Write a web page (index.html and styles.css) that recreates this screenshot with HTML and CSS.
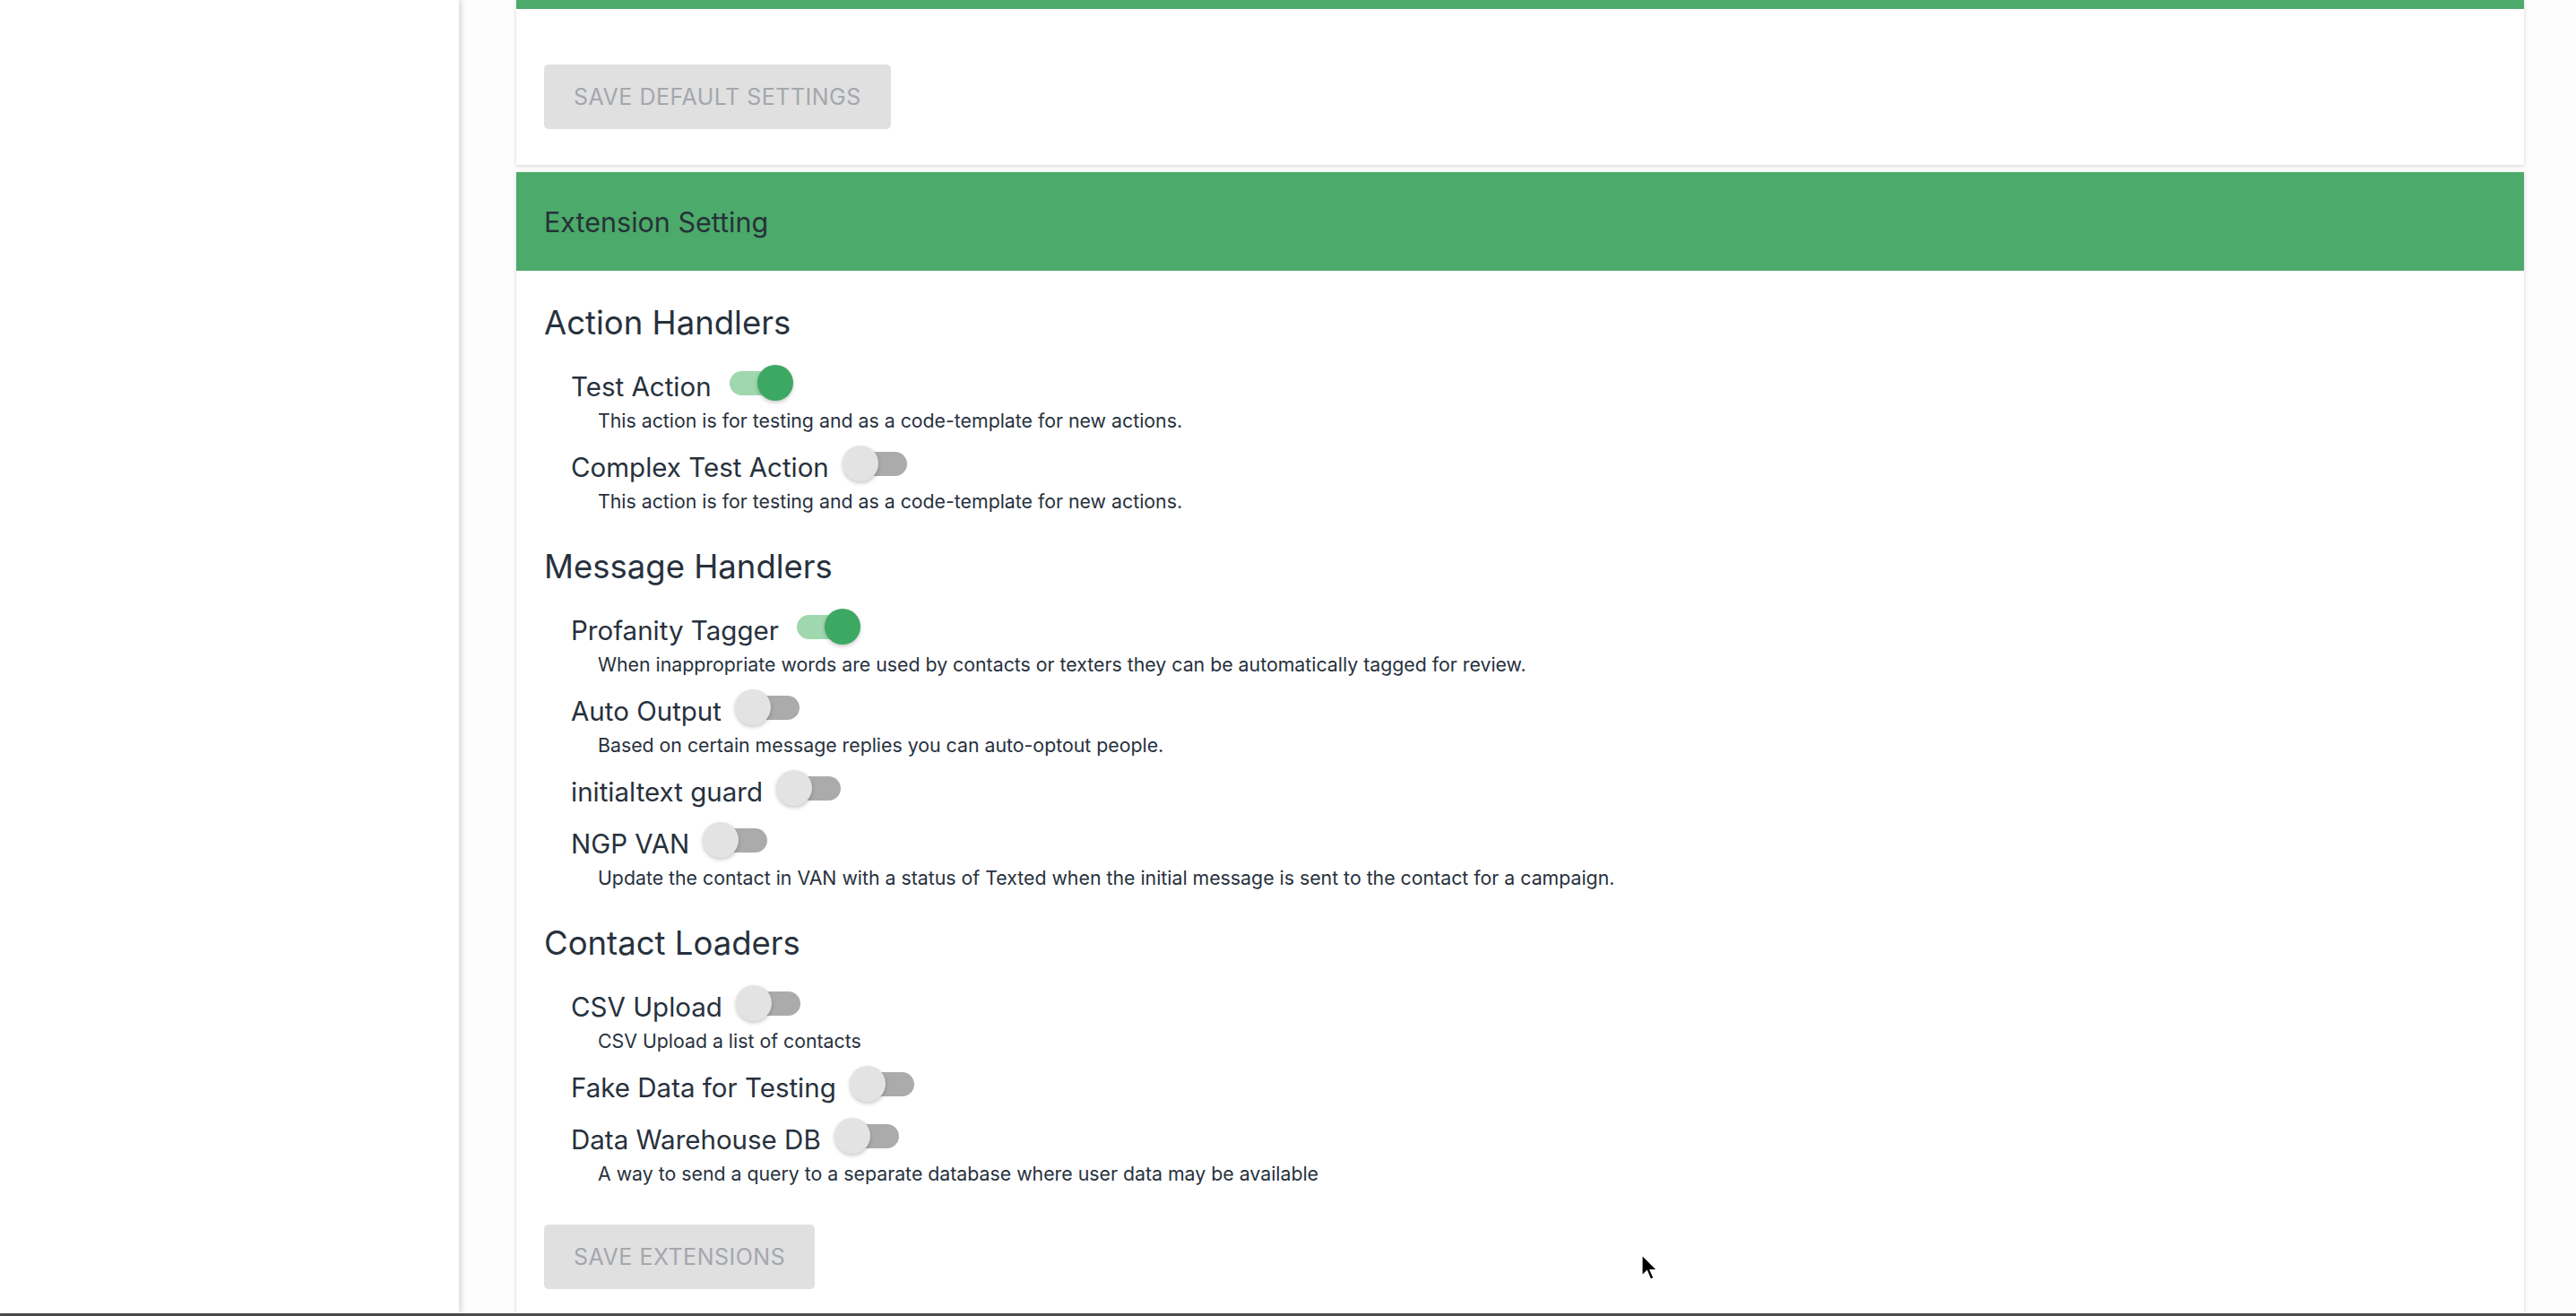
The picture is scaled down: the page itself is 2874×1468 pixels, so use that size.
FILE: index.html
```html
<!DOCTYPE html>
<html lang="en">
<head>
  <meta charset="UTF-8" />
  <title>Extension Settings</title>
  <link rel="stylesheet" href="styles.css">
</head>
<body>
  <div class="screen">
    <div class="layout">
      <aside class="sidebar"></aside>

      <main class="main">
        <section class="card card-top">
          <div class="card-strip"></div>
          <div class="card-body">
            <button class="btn" disabled>Save Default Settings</button>
          </div>
        </section>

        <section class="card">
          <div class="card-header">Extension Setting</div>
          <div class="card-content">

            <div class="group">
              <h2 class="group-title">Action Handlers</h2>
              <div class="item">
                <div class="item-row">
                  <span class="item-label">Test Action</span>
                  <span class="switch on"><span class="track"><span class="thumb"></span></span></span>
                </div>
                <div class="item-desc">This action is for testing and as a code-template for new actions.</div>
              </div>
              <div class="item">
                <div class="item-row">
                  <span class="item-label">Complex Test Action</span>
                  <span class="switch"><span class="track"><span class="thumb"></span></span></span>
                </div>
                <div class="item-desc">This action is for testing and as a code-template for new actions.</div>
              </div>
            </div>

            <div class="group">
              <h2 class="group-title">Message Handlers</h2>
              <div class="item">
                <div class="item-row">
                  <span class="item-label">Profanity Tagger</span>
                  <span class="switch on"><span class="track"><span class="thumb"></span></span></span>
                </div>
                <div class="item-desc">When inappropriate words are used by contacts or texters they can be automatically tagged for review.</div>
              </div>
              <div class="item">
                <div class="item-row">
                  <span class="item-label">Auto Output</span>
                  <span class="switch"><span class="track"><span class="thumb"></span></span></span>
                </div>
                <div class="item-desc">Based on certain message replies you can auto-optout people.</div>
              </div>
              <div class="item">
                <div class="item-row">
                  <span class="item-label">initialtext guard</span>
                  <span class="switch"><span class="track"><span class="thumb"></span></span></span>
                </div>
              </div>
              <div class="item">
                <div class="item-row">
                  <span class="item-label">NGP VAN</span>
                  <span class="switch"><span class="track"><span class="thumb"></span></span></span>
                </div>
                <div class="item-desc">Update the contact in VAN with a status of Texted when the initial message is sent to the contact for a campaign.</div>
              </div>
            </div>

            <div class="group">
              <h2 class="group-title">Contact Loaders</h2>
              <div class="item">
                <div class="item-row">
                  <span class="item-label">CSV Upload</span>
                  <span class="switch"><span class="track"><span class="thumb"></span></span></span>
                </div>
                <div class="item-desc">CSV Upload a list of contacts</div>
              </div>
              <div class="item">
                <div class="item-row">
                  <span class="item-label">Fake Data for Testing</span>
                  <span class="switch"><span class="track"><span class="thumb"></span></span></span>
                </div>
              </div>
              <div class="item">
                <div class="item-row">
                  <span class="item-label">Data Warehouse DB</span>
                  <span class="switch"><span class="track"><span class="thumb"></span></span></span>
                </div>
                <div class="item-desc">A way to send a query to a separate database where user data may be available</div>
              </div>
            </div>

            <button class="btn btn-save" disabled>Save Extensions</button>
          </div>
        </section>
      </main>
    </div>

    <div class="bottom-line"></div>

    <!-- mouse pointer -->
    <svg class="cursor" width="20" height="30" viewBox="0 0 20 30">
      <path d="M1 1 L1 24 L6.5 18.5 L10.5 28 L14 26.5 L10 17.5 L17.5 17.5 Z" fill="#000" stroke="#fff" stroke-width="1.2"/>
    </svg>
  </div>
</body>
</html>
```

FILE: styles.css
```css
* {
  box-sizing: border-box;
}

body {
  margin: 0;
  font-family: Inter, "Noto Sans", sans-serif;
  color: #27313d;
  background: #fdfdfd;
}

.screen {
  position: relative;
  width: 2874px;
  height: 1468px;
  display: flex;
  flex-direction: column;
  overflow: hidden;
}

.layout {
  flex: 1;
  display: flex;
  min-height: 0;
}

.sidebar {
  width: 512px;
  flex: none;
  background: #fff;
  box-shadow: 3px 0 6px rgba(0, 0, 0, 0.14);
  position: relative;
  z-index: 1;
}

.main {
  flex: 1;
  min-width: 0;
  padding: 0 58px 0 64px;
  display: flex;
  flex-direction: column;
  gap: 8px;
}

.card {
  flex: none;
  background: #fff;
  box-shadow: 0 1px 4px rgba(0, 0, 0, 0.18);
}

.card-strip {
  height: 10px;
  background: #4caa6a;
}

.card-top .card-body {
  padding: 62px 31px 40px;
}

.btn {
  height: 72px;
  padding: 0 33px;
  border: none;
  border-radius: 5px;
  background: #e0e0e0;
  color: #a4a7ac;
  font-family: inherit;
  font-size: 25px;
  font-weight: 400;
  letter-spacing: 0.5px;
  text-transform: uppercase;
}

.card-header {
  height: 110px;
  display: flex;
  align-items: center;
  padding-left: 31px;
  background: #4caa6a;
  color: #263238;
  font-size: 30.5px;
}

.card-content {
  display: flex;
  flex-direction: column;
  align-items: flex-start;
  padding: 36px 31px 40px;
}

.group {
  display: flex;
  flex-direction: column;
  align-self: stretch;
}

.group + .group {
  margin-top: 33px;
}

.group-title {
  margin: 0 0 15px;
  font-size: 36.5px;
  font-weight: 400;
  line-height: 44px;
}

.item {
  margin-top: 10px;
  padding-left: 30px;
}

.item-row {
  display: flex;
  align-items: center;
  height: 48px;
}

.item-label {
  font-size: 29.5px;
}

.item-desc {
  padding-left: 30px;
  margin-bottom: 4px;
  font-size: 21.3px;
  line-height: 28px;
}

/* toggle switch */
.switch {
  display: flex;
  align-items: center;
  padding-left: 20px;
  margin-bottom: 8px;
}

.track {
  position: relative;
  width: 67px;
  height: 27px;
  border-radius: 14px;
  background: #ababab;
}

.thumb {
  position: absolute;
  top: -7px;
  left: -5px;
  width: 40px;
  height: 40px;
  border-radius: 50%;
  background: #e3e3e3;
  box-shadow: 0 2px 4px rgba(0, 0, 0, 0.22);
}

.switch.on .track {
  background: #9fd7ae;
}

.switch.on .thumb {
  left: 31px;
  background: #3da862;
}

.btn-save {
  margin-top: 39px;
}

.bottom-line {
  height: 3px;
  flex: none;
  background: #4a4a4a;
}

.cursor {
  position: absolute;
  left: 1831px;
  top: 1399px;
}
```
